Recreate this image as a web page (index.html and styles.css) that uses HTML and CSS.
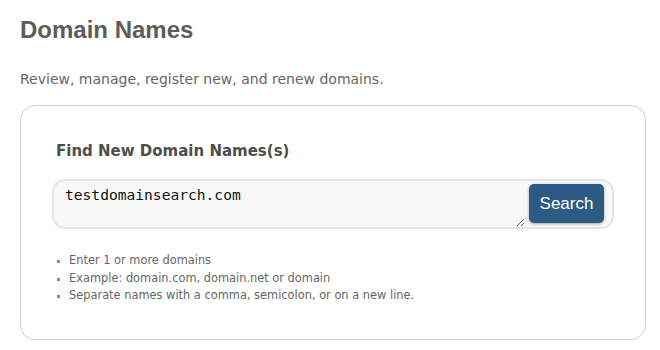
FILE: index.html
```html
<!DOCTYPE html>
<html lang="en">
<head>
<meta charset="utf-8">
<title>Domain Names</title>
<link rel="stylesheet" href="styles.css">
</head>
<body>
<main class="page">
  <h1 class="title">Domain Names</h1>
  <p class="subtitle">Review, manage, register new, and renew domains.</p>
  <section class="card">
    <h2 class="card-title">Find New Domain Names(s)</h2>
    <div class="search-box">
      <textarea class="search-input" spellcheck="false">testdomainsearch.com</textarea>
      <button class="search-btn" type="button">Search</button>
    </div>
    <ul class="hints">
      <li>Enter 1 or more domains</li>
      <li>Example: domain.com, domain.net or domain</li>
      <li>Separate names with a comma, semicolon, or on a new line.</li>
    </ul>
  </section>
</main>
</body>
</html>
```
FILE: styles.css
```css
html, body {
  margin: 0;
  padding: 0;
  background: #ffffff;
}

.page {
  padding: 16px 14px 0 20px;
  width: 626px;
}

.title {
  margin: 0;
  font-family: "Liberation Sans", Arial, sans-serif;
  font-weight: bold;
  font-size: 24px;
  line-height: 28px;
  color: #5c5c5c;
}

.subtitle {
  margin: 25px 0 0;
  font-family: "DejaVu Sans", Verdana, sans-serif;
  font-size: 14px;
  line-height: 20px;
  color: #666666;
}

.card {
  margin-top: 16px;
  border: 1px solid #cfcfcf;
  border-radius: 15px;
  padding: 35px 31px 30px;
  box-sizing: border-box;
  height: 235px;
}

.card-title {
  margin: 0 0 0 4px;
  font-family: "DejaVu Sans", Verdana, sans-serif;
  font-weight: bold;
  font-size: 15px;
  line-height: 20px;
  color: #4d4d4d;
}

.search-box {
  margin-top: 18px;
  display: flex;
  align-items: flex-start;
  gap: 4px;
  height: 50px;
  box-sizing: border-box;
  border: 2px solid #e4e4e4;
  border-radius: 13px;
  background: #f8f8f8;
  padding: 0 8px 0 0;
}

.search-input {
  flex: 1;
  height: 46px;
  box-sizing: border-box;
  margin: 0;
  border: none;
  background: transparent;
  padding: 5px 10px 0 11px;
  font-family: "DejaVu Sans Mono", Consolas, monospace;
  font-size: 14.6px;
  color: #111111;
  outline: none;
  border-radius: 11px 0 0 11px;
}

.search-btn {
  margin-top: 3px;
  width: 75px;
  height: 39px;
  border: none;
  border-radius: 5px;
  background: #2d5a82;
  color: #ffffff;
  font-family: "Liberation Sans", Arial, sans-serif;
  font-size: 17px;
  box-shadow: 0 1px 3px rgba(0, 0, 0, 0.35);
  padding: 0;
}

.hints {
  margin: 23px 0 0;
  padding-left: 17px;
  list-style: square;
  font-family: "DejaVu Sans", Verdana, sans-serif;
  font-size: 11.4px;
  line-height: 17.5px;
  color: #666666;
}

.hints li::marker {
  color: #8a8a8a;
  font-size: 9px;
}
```
